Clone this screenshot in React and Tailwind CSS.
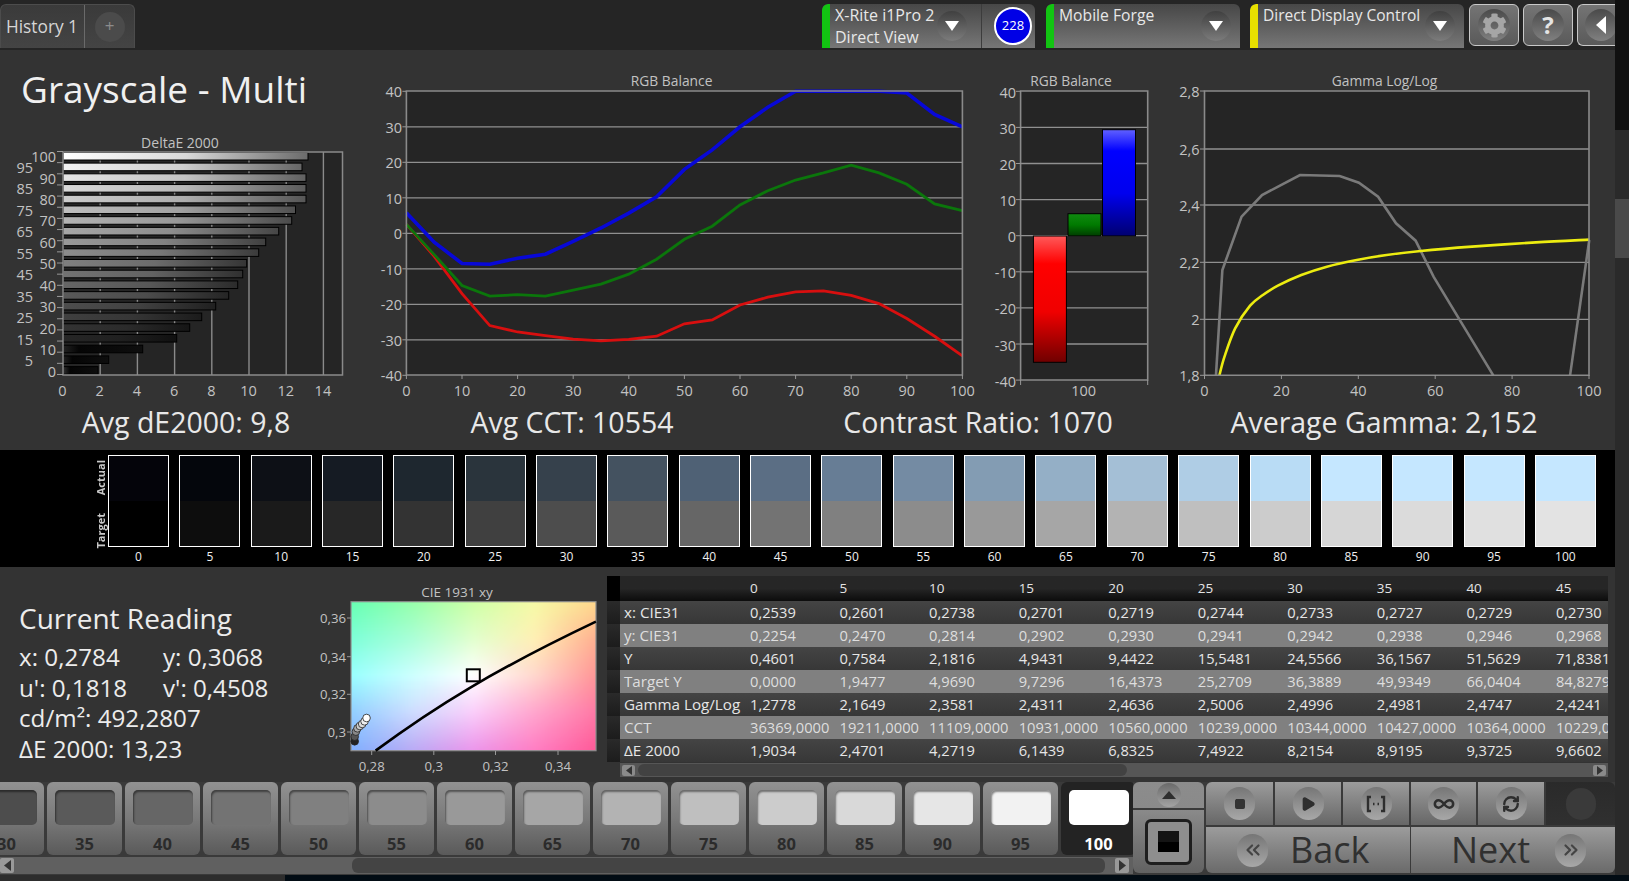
import React from 'react'
import { Play, Square, Infinity as InfinityIcon, RefreshCw, ChevronsLeft, ChevronsRight } from 'lucide-react'
import { FaCog } from 'react-icons/fa'

const levels = [0, 5, 10, 15, 20, 25, 30, 35, 40, 45, 50, 55, 60, 65, 70, 75, 80, 85, 90, 95, 100]

// right end of every DeltaE bar, in page pixels
const deltaEnds = [98, 108.7, 142.7, 176.7, 189.7, 201.7, 215.7, 228.7, 237.7, 242.7, 246.7, 258.7, 265.7, 278.7, 291.7, 295.5, 306, 306, 306, 302, 308]

const blue = [5.8, -2.5, -8.5, -8.7, -7, -5.9, -2.3, 1.5, 5.7, 10.3, 18, 23.5, 30, 35.5, 40, 40, 40, 40, 39.5, 33.5, 30]
const green = [2.5, -6, -14.7, -17.7, -17.3, -17.7, -16, -14.3, -11.5, -7.3, -1.7, 2, 8, 12, 15, 17, 19.2, 17, 13.8, 8.3, 6.4]
const red = [2.5, -6.5, -17, -26, -27.8, -28.8, -29.8, -30.3, -29.9, -29, -25.5, -24.4, -20.2, -18, -16.5, -16.2, -17.5, -19.8, -24, -29, -34.5]

const swatches = [
  ['#04040a', '#000000'], ['#04060c', '#0d0d0d'], ['#0d1016', '#1a1a1a'], ['#151b23', '#272727'], ['#1e272f', '#333333'],
  ['#2a343c', '#404040'], ['#36414c', '#4d4d4d'], ['#445260', '#5a5a5a'], ['#4f6175', '#666666'], ['#5b6e84', '#737373'],
  ['#677d95', '#808080'], ['#748ba3', '#8c8c8c'], ['#839cb3', '#999999'], ['#94afc6', '#a6a6a6'], ['#a4bfd6', '#b3b3b3'],
  ['#afcde5', '#bfbfbf'], ['#b9dcf5', '#cccccc'], ['#c5e7ff', '#d6d6d6'], ['#c5e7ff', '#dbdbdb'], ['#c5e7ff', '#e0e0e0'], ['#c5e7ff', '#e3e3e3'],
]

const rows = [
  ['x: CIE31', '0,2539', '0,2601', '0,2738', '0,2701', '0,2719', '0,2744', '0,2733', '0,2727', '0,2729', '0,2730'],
  ['y: CIE31', '0,2254', '0,2470', '0,2814', '0,2902', '0,2930', '0,2941', '0,2942', '0,2938', '0,2946', '0,2968'],
  ['Y', '0,4601', '0,7584', '2,1816', '4,9431', '9,4422', '15,5481', '24,5566', '36,1567', '51,5629', '71,8381'],
  ['Target Y', '0,0000', '1,9477', '4,9690', '9,7296', '16,4373', '25,2709', '36,3889', '49,9349', '66,0404', '84,8279'],
  ['Gamma Log/Log', '1,2778', '2,1649', '2,3581', '2,4311', '2,4636', '2,5006', '2,4996', '2,4981', '2,4747', '2,4241'],
  ['CCT', '36369,0000', '19211,0000', '11109,0000', '10931,0000', '10560,0000', '10239,0000', '10344,0000', '10427,0000', '10364,0000', '10229,0000'],
  ['ΔE 2000', '1,9034', '2,4701', '4,2719', '6,1439', '6,8325', '7,4922', '8,2154', '8,9195', '9,3725', '9,6602'],
]

const tiles = [
  [30, '#4d4d4d'], [35, '#5a5a5a'], [40, '#666666'], [45, '#737373'], [50, '#808080'], [55, '#8c8c8c'], [60, '#999999'], [65, '#a6a6a6'],
  [70, '#b3b3b3'], [75, '#bfbfbf'], [80, '#cccccc'], [85, '#d9d9d9'], [90, '#e6e6e6'], [95, '#f2f2f2'],
]

// colours of the xy plot, sampled on a 5x5 grid
const cieGrid = [
  [[102, 255, 178], [150, 255, 170], [205, 255, 165], [245, 250, 165], [255, 217, 140]],
  [[125, 255, 215], [170, 255, 215], [225, 255, 205], [255, 240, 180], [255, 176, 144]],
  [[153, 255, 255], [205, 255, 255], [255, 255, 255], [255, 215, 205], [255, 150, 150]],
  [[145, 205, 255], [205, 220, 255], [250, 205, 250], [255, 165, 205], [255, 120, 165]],
  [[128, 176, 255], [185, 170, 245], [235, 150, 235], [255, 125, 195], [255, 90, 152]],
]

const clamp01 = (n) => Math.min(Math.max(n, 0), 1)

const cieColor = (rawU, rawV) => {
  const gx = clamp01(rawU) * 4
  const gy = clamp01(rawV) * 4
  const ix = Math.min(Math.floor(gx), 3)
  const iy = Math.min(Math.floor(gy), 3)
  const fx = gx - ix
  const fy = gy - iy
  const c = [0, 1, 2].map((k) =>
    Math.round(
      cieGrid[iy][ix][k] * (1 - fx) * (1 - fy) +
        cieGrid[iy][ix + 1][k] * fx * (1 - fy) +
        cieGrid[iy + 1][ix][k] * (1 - fx) * fy +
        cieGrid[iy + 1][ix + 1][k] * fx * fy
    )
  )
  return `rgb(${c[0]},${c[1]},${c[2]})`
}

// catmull-rom through the points, as svg beziers
const smooth = (p) => {
  let d = `M${p[0][0]} ${p[0][1]}`
  for (let i = 0; i < p.length - 1; i++) {
    const a = p[Math.max(i - 1, 0)]
    const b = p[i]
    const c = p[i + 1]
    const e = p[Math.min(i + 2, p.length - 1)]
    d += `C${b[0] + (c[0] - a[0]) / 6} ${b[1] + (c[1] - a[1]) / 6} ${c[0] - (e[0] - b[0]) / 6} ${c[1] - (e[1] - b[1]) / 6} ${c[0]} ${c[1]}`
  }
  return d
}

const Label = ({ x, y, children, anchor = 'middle', className = 'fill-[#c2c2c2]', size = 13.8 }) => (
  <text x={x} y={y} textAnchor={anchor} dominantBaseline="central" fontSize={size} className={className}>
    {children}
  </text>
)

const DeltaChart = () => {
  const barY = (i) => 370.4 - i * 10.71
  return (
    <svg width="370" height="270" viewBox="0 130 370 270" className="block">
      <defs>
        {levels.map((l) => {
          const base = Math.max(Math.round(l * 2.55), 34)
          const mid = Math.round(base * 0.85)
          const end = Math.round(base * 0.42)
          return (
            <linearGradient key={l} id={`de${l}`} x1="0" x2="1" y1="0" y2="0">
              <stop offset="0" stopColor={l === 0 ? '#333' : `rgb(${base},${base},${base})`} />
              <stop offset={l < 15 ? '0.2' : '0.5'} stopColor={l < 15 ? '#050505' : `rgb(${mid},${mid},${mid})`} />
              <stop offset="1" stopColor={`rgb(${end},${end},${end})`} />
            </linearGradient>
          )
        })}
      </defs>
      <Label x={180} y={142.5} size={14}>DeltaE 2000</Label>
      <rect x="63" y="152" width="279.5" height="223" fill="#252525" />
      {[2, 4, 6, 8, 10, 12, 14].map((v) => (
        <line key={v} x1={63 + v * 18.6} x2={63 + v * 18.6} y1="152" y2="375" stroke="#8a8a8a" strokeWidth="1.4" />
      ))}
      {levels.map((l, i) => (
        <rect key={l} x="63" y={barY(i) - 3.8} width={deltaEnds[i] - 63} height="7.6" fill={`url(#de${l})`} stroke="#000" strokeWidth="1" />
      ))}
      <path d="M63 152H342.5V375H63Z" fill="none" stroke="#8a8a8a" strokeWidth="1.5" />
      {levels.map((l, i) => (
        <line key={l} x1="57" x2="63" y1={151.5 + i * 11.15} y2={151.5 + i * 11.15} stroke="#999" strokeWidth="1" />
      ))}
      {levels.map((l, i) => (
        <Label key={l} x={i % 2 === 0 ? 56 : 33} y={371.2 - i * 10.73} anchor="end" size={14.5}>{l}</Label>
      ))}
      {[0, 2, 4, 6, 8, 10, 12, 14].map((v) => (
        <Label key={v} x={62.5 + v * 18.6} y={390} size={14.5}>{v}</Label>
      ))}
    </svg>
  )
}

const BalanceChart = () => {
  const left = 406.4
  const step = 556 / 20
  const yOf = (v) => 233.3 - v * 3.55
  const line = (data) => data.map((v, i) => `${left + i * step},${yOf(v)}`).join(' ')
  return (
    <svg width="610" height="350" viewBox="370 50 610 350" className="block">
      <Label x={671.6} y={80.8}>RGB Balance</Label>
      <rect x={left} y="91" width="556" height="284" fill="#252525" />
      {[30, 20, 10, 0, -10, -20, -30].map((v) => (
        <line key={v} x1={left} x2={962.4} y1={yOf(v)} y2={yOf(v)} stroke="#909090" strokeWidth="1.3" />
      ))}
      <polyline points={line(red)} fill="none" stroke="#d80f0f" strokeWidth="2.8" />
      <polyline points={line(green)} fill="none" stroke="#0b760b" strokeWidth="2.8" />
      <polyline points={line(blue)} fill="none" stroke="#0808d8" strokeWidth="3.6" />
      <path d={`M${left} 91H962.4V375H${left}Z`} fill="none" stroke="#8a8a8a" strokeWidth="1.6" />
      {[40, 30, 20, 10, 0, -10, -20, -30, -40].map((v) => (
        <g key={v}>
          <line x1={left - 4} x2={left} y1={yOf(v)} y2={yOf(v)} stroke="#999" />
          <Label x={402} y={yOf(v) + 0.5} anchor="end" size={14.5}>{v}</Label>
        </g>
      ))}
      {[0, 10, 20, 30, 40, 50, 60, 70, 80, 90, 100].map((v) => (
        <g key={v}>
          <line x1={left + v * 5.56} x2={left + v * 5.56} y1="375" y2="379" stroke="#999" />
          <Label x={left + v * 5.56} y={390} size={14.5}>{v}</Label>
        </g>
      ))}
    </svg>
  )
}

const SummaryBars = () => {
  const yOf = (v) => 235.7 - v * 3.61
  return (
    <svg width="190" height="350" viewBox="980 50 190 350" className="block">
      <defs>
        <linearGradient id="barRed" x1="0" x2="0" y1="0" y2="1">
          <stop offset="0" stopColor="#ff5a5a" />
          <stop offset="0.22" stopColor="#ff0000" />
          <stop offset="0.6" stopColor="#f00000" />
          <stop offset="1" stopColor="#700000" />
        </linearGradient>
        <linearGradient id="barGreen" x1="0" x2="0" y1="0" y2="1">
          <stop offset="0" stopColor="#108a10" />
          <stop offset="0.5" stopColor="#007a00" />
          <stop offset="1" stopColor="#003c00" />
        </linearGradient>
        <linearGradient id="barBlue" x1="0" x2="0" y1="0" y2="1">
          <stop offset="0" stopColor="#6060ff" />
          <stop offset="0.2" stopColor="#0000ff" />
          <stop offset="0.6" stopColor="#0000ee" />
          <stop offset="1" stopColor="#000070" />
        </linearGradient>
      </defs>
      <Label x={1071} y={80.8}>RGB Balance</Label>
      <rect x="1020.6" y="91" width="127" height="289" fill="#252525" />
      {[30, 20, 10, 0, -10, -20, -30].map((v) => (
        <line key={v} x1="1020.6" x2="1147.7" y1={yOf(v)} y2={yOf(v)} stroke="#909090" strokeWidth="1.3" />
      ))}
      <rect x="1033.4" y="236" width="33" height="126.3" fill="url(#barRed)" stroke="#000" />
      <rect x="1068" y="213.7" width="33" height="22.3" fill="url(#barGreen)" stroke="#000" />
      <rect x="1102.5" y="129.7" width="33" height="106.3" fill="url(#barBlue)" stroke="#000" />
      <path d="M1020.6 91H1147.7V380H1020.6Z" fill="none" stroke="#8a8a8a" strokeWidth="1.6" />
      <path d="M1020.6 380V385M1147.7 380V385" stroke="#999" />
      {[40, 30, 20, 10, 0, -10, -20, -30, -40].map((v) => (
        <g key={v}>
          <line x1="1016" x2="1020.6" y1={yOf(v)} y2={yOf(v)} stroke="#999" />
          <Label x={1016} y={yOf(v) + 1} anchor="end" size={14.5}>{v}</Label>
        </g>
      ))}
      <Label x={1083.7} y={390} size={14.5}>100</Label>
    </svg>
  )
}

const GammaChart = () => {
  const px = (zx) => zx / 2.344 + 960
  const py = (zy) => zy / 3 + 70
  const map = (list) => list.map(([x, y]) => [px(x), py(y)])
  const pts = (list) => map(list).map(([x, y]) => `${x},${y}`).join(' ')
  const gray = [[600, 916], [615, 600], [660, 440], [708, 375], [750, 347], [797, 315], [890, 318], [935, 338], [980, 380], [1022, 460], [1068, 512], [1110, 620], [1250, 916]]
  const yellow = [[608, 916], [620, 860], [645, 775], [680, 707], [710, 675], [745, 647], [800, 615], [860, 590], [930, 570], [1000, 555], [1080, 543], [1200, 530], [1350, 517], [1475, 509]]
  return (
    <svg width="445" height="350" viewBox="1170 50 445 350" className="block">
      <Label x={1384.5} y={80.8}>Gamma Log/Log</Label>
      <rect x="1204.5" y="91" width="384.5" height="284.3" fill="#252525" />
      {[149, 205, 262.3, 319.3].map((y) => (
        <line key={y} x1="1204.5" x2="1589" y1={y} y2={y} stroke="#909090" strokeWidth="1.3" />
      ))}
      <polyline points={pts(gray)} fill="none" stroke="#7a7a7a" strokeWidth="2.6" />
      <polyline points={pts([[1430, 916], [1475, 510]])} fill="none" stroke="#7a7a7a" strokeWidth="2.6" />
      <path d={smooth(map(yellow))} fill="none" stroke="#ecec10" strokeWidth="2.6" />
      <path d="M1204.5 91H1589V375.3H1204.5Z" fill="none" stroke="#8a8a8a" strokeWidth="1.6" />
      {[['2,8', 91], ['2,6', 149], ['2,4', 205], ['2,2', 262.3], ['2', 319.3], ['1,8', 375.3]].map(([t, y]) => (
        <g key={t}>
          <line x1="1200" x2="1204.5" y1={y} y2={y} stroke="#999" />
          <Label x={1199.5} y={y} anchor="end" size={14.5}>{t}</Label>
        </g>
      ))}
      {[0, 20, 40, 60, 80, 100].map((v) => (
        <g key={v}>
          <line x1={1204.5 + v * 3.845} x2={1204.5 + v * 3.845} y1="375" y2="379" stroke="#999" />
          <Label x={1204.5 + v * 3.845} y={390} size={14.5}>{v}</Label>
        </g>
      ))}
    </svg>
  )
}

const CieChart = () => {
  const cells = []
  // 4px cells, blurred below so the plot reads as one smooth field
  for (let j = -3; j < 41; j++) {
    for (let i = -3; i < 64; i++) {
      cells.push(
        <rect key={`${i}-${j}`} x={351 + i * 4} y={601 + j * 4} width="4.5" height="4.5" fill={cieColor((i + 0.5) / 61.25, (j + 0.5) / 37.25)} />
      )
    }
  }
  const px = (zx) => zx / 2.529
  const py = (zy) => zy / 3 + 580
  const dots = [[897, 484, '#222'], [897, 470, '#555'], [900, 455, '#888'], [904, 445, '#aaa'], [910, 438, '#ccc'], [916, 432, '#ddd'], [922, 424, '#eee'], [927, 414, '#fff']]
  return (
    <svg width="307" height="215" viewBox="300 567 307 215" className="block">
      <defs>
        <clipPath id="ciePlot">
          <rect x="351" y="601.7" width="245" height="149" />
        </clipPath>
        <filter id="cieBlur" x="-5%" y="-5%" width="110%" height="110%">
          <feGaussianBlur stdDeviation="2" />
        </filter>
      </defs>
      <Label x={457} y={592.2} size={13.5}>CIE 1931 xy</Label>
      <g clipPath="url(#ciePlot)">
        <g filter="url(#cieBlur)">{cells}</g>
      </g>
      <rect x="351" y="601.7" width="245" height="149" fill="none" stroke="#8c8c8c" strokeWidth="1.2" />
      <path
        d={`M${px(950)} ${py(512)}C${px(1100)} ${py(380)} ${px(1250)} ${py(270)} ${px(1507)} ${py(125)}`}
        fill="none"
        stroke="#000"
        strokeWidth="2.6"
      />
      <rect x="466.8" y="669.3" width="13" height="12" fill="none" stroke="#000" strokeWidth="2" />
      {dots.map(([x, y, c]) => (
        <circle key={y} cx={px(x)} cy={py(y)} r="3.8" fill={c} stroke="#222" strokeWidth="0.8" />
      ))}
      {[['0,36', 618], ['0,34', 656.7], ['0,32', 694.3], ['0,3', 732]].map(([t, y]) => (
        <g key={t}>
          <line x1="347" x2="351" y1={y} y2={y} stroke="#999" />
          <Label x={346} y={y} anchor="end" size={13.2}>{t}</Label>
        </g>
      ))}
      {[['0,28', 371.7], ['0,3', 433.8], ['0,32', 495.5], ['0,34', 558]].map(([t, x]) => (
        <g key={t}>
          <line x1={x} x2={x} y1="751" y2="755" stroke="#999" />
          <Label x={x} y={766} size={13.2}>{t}</Label>
        </g>
      ))}
    </svg>
  )
}

const TriangleDown = ({ className = 'fill-white' }) => (
  <svg width="14" height="10" viewBox="0 0 14 10" className={className}>
    <polygon points="0,0 14,0 7,10" />
  </svg>
)

const Dropdown = () => (
  <div className="flex h-[30px] w-[30px] shrink-0 items-center justify-center rounded-full bg-linear-to-b from-[#404040] to-[#7c7c7c]">
    <TriangleDown />
  </div>
)

const DevicePanel = ({ bar, width, gap, children }) => (
  <div className={`flex h-[44px] shrink-0 overflow-hidden rounded-t-md bg-linear-to-b from-[#474747] to-[#777777] ${width} ${gap}`}>
    <div className={`w-[8px] shrink-0 rounded-tl-md ${bar}`} />
    {children}
  </div>
)

const IconButton = ({ children, className = '' }) => (
  <div className={`flex h-[42px] shrink-0 items-center justify-center rounded-md border border-[#c8c8c8] bg-linear-to-b from-[#747474] to-[#5a5a5a] ${className}`}>
    <div className="flex h-[32px] w-[32px] items-center justify-center rounded-full bg-linear-to-b from-[#4a4a4a] to-[#808080]">{children}</div>
  </div>
)

const TopBar = () => (
  <div className="flex h-[50px] shrink-0 items-start bg-[#252525] pt-[4px]">
    <div className="flex h-[44px] w-[135px] shrink-0 rounded-t-md border border-b-0 border-[#4c4c4c] bg-linear-to-b from-[#3a3a3a] to-[#444444]">
      <div className="flex w-[84px] items-center border-r border-[#6a6a6a] pl-[5px] text-[17.3px] text-[#d6d6d6]">History 1</div>
      <div className="flex flex-1 items-center justify-center">
        <div className="flex h-[30px] w-[30px] items-center justify-center rounded-full bg-[#4b4b4b] pb-[1px] text-[17px] text-[#8c8c8c]">+</div>
      </div>
    </div>
    <DevicePanel bar="bg-[#12c412]" width="w-[213px]" gap="ml-[687px]">
      <div className="flex w-[152px] shrink-0 items-center border-r border-[#3c3c3c]">
        <div className="w-[107px] pl-[5px] text-[16px] leading-[22px] whitespace-nowrap text-[#e8e8e8]">
          <div>X-Rite i1Pro 2</div>
          <div>Direct View</div>
        </div>
        <Dropdown />
      </div>
      <div className="flex flex-1 items-center justify-center pl-[9px]">
        <div className="flex h-[38px] w-[38px] shrink-0 items-center justify-center rounded-full border-2 border-white bg-[#0000e6] text-[13px] text-white">228</div>
      </div>
    </DevicePanel>
    <DevicePanel bar="bg-[#12c412]" width="w-[194px]" gap="ml-[11px]">
      <div className="flex flex-1 items-center justify-between pr-[9px]">
        <div className="self-start pl-[5px] text-[15.7px] leading-[22px] text-[#e8e8e8]">Mobile Forge</div>
        <Dropdown />
      </div>
    </DevicePanel>
    <DevicePanel bar="bg-[#e8e000]" width="w-[214px]" gap="ml-[10px]">
      <div className="flex flex-1 items-center justify-between pr-[9px]">
        <div className="self-start pl-[5px] text-[15.5px] leading-[22px] whitespace-nowrap text-[#e8e8e8]">Direct Display Control</div>
        <Dropdown />
      </div>
    </DevicePanel>
    <IconButton className="ml-[5px] w-[50px]">
      <FaCog size={25} className="text-[#a6a6a6]" />
    </IconButton>
    <IconButton className="ml-[4px] w-[50px]">
      <span className="text-[24px] font-bold text-[#e4e4e4]">?</span>
    </IconButton>
    <IconButton className="ml-[4px] w-[40px] justify-end rounded-r-none border-r-0">
      <svg width="10" height="18" viewBox="0 0 10 18" className="fill-white">
        <polygon points="10,0 10,18 0,9" />
      </svg>
    </IconButton>
  </div>
)

const ChartsPanel = () => (
  <div className="flex h-[400px] shrink-0 flex-col bg-[#333333]">
    <div className="flex h-[350px] shrink-0">
      <div className="flex w-[370px] shrink-0 flex-col">
        <h1 className="h-[80px] pt-[17px] pl-[21px] text-[37px] leading-[44px] whitespace-nowrap text-[#f0f0f0]">Grayscale - Multi</h1>
        <DeltaChart />
      </div>
      <BalanceChart />
      <SummaryBars />
      <GammaChart />
    </div>
    <div className="flex h-[50px] items-center pb-[5px] text-[28.5px] whitespace-nowrap text-[#e8e8e8]">
      <div className="w-[372px] text-center">Avg dE2000: 9,8</div>
      <div className="w-[400px] text-center">Avg CCT: 10554</div>
      <div className="w-[412px] text-center">Contrast Ratio: 1070</div>
      <div className="w-[400px] text-center">Average Gamma: 2,152</div>
    </div>
  </div>
)

const SwatchBand = () => (
  <div className="flex h-[117px] shrink-0 bg-black pt-[5px] pl-[92px]">
    <div className="flex h-[92px] w-[16px] shrink-0 flex-col gap-[18px] pt-[5px] text-[11px] leading-none font-bold text-[#c8c8c8]">
      <span className="rotate-180 self-center [writing-mode:vertical-rl]">Actual</span>
      <span className="rotate-180 self-center [writing-mode:vertical-rl]">Target</span>
    </div>
    <div className="flex gap-[10.35px]">
      {swatches.map(([actual, target], i) => (
        <div key={levels[i]} className="w-[61px] shrink-0">
          <div className="h-[92px] border-[1.5px] border-white">
            <div className="h-1/2" style={{ backgroundColor: actual }} />
            <div className="h-1/2" style={{ backgroundColor: target }} />
          </div>
          <div className="mt-[1px] text-center text-[12px] leading-[17px] text-[#f0f0f0]">{levels[i]}</div>
        </div>
      ))}
    </div>
  </div>
)

const Readings = () => (
  <div className="w-[300px] shrink-0 pt-[34px] pl-[19px] text-[#ececec]">
    <h2 className="text-[28px] leading-[34px] whitespace-nowrap">Current Reading</h2>
    <div className="mt-[7px] text-[24.2px] leading-[30.6px] whitespace-nowrap">
      <div className="flex">
        <span className="w-[144px]">x: 0,2784</span>
        <span>y: 0,3068</span>
      </div>
      <div className="flex">
        <span className="w-[144px]">u': 0,1818</span>
        <span>v': 0,4508</span>
      </div>
      <div>cd/m²: 492,2807</div>
      <div>ΔE 2000: 13,23</div>
    </div>
  </div>
)

const ReadingsTable = () => (
  <div className="mt-[9px] flex h-[201px] w-[1001px] shrink-0">
    <div className="w-[13px] shrink-0">
      <div className="h-[25px] bg-black" />
      {rows.map((r) => (
        <div key={r[0]} className="h-[23px] bg-linear-to-b from-[#2a2a2a] to-[#1c1c1c]" />
      ))}
    </div>
    <div className="flex min-w-0 flex-1 flex-col">
      <div className="h-[187px] overflow-hidden">
        <table className="w-[1025.5px] table-fixed border-collapse text-[14.7px] whitespace-nowrap">
          <colgroup>
            <col className="w-[130px]" />
            {rows[0].slice(1).map((_, i) => (
              <col key={i} className="w-[89.55px]" />
            ))}
          </colgroup>
          <thead>
            <tr className="h-[25px] bg-linear-to-b from-[#262626] via-[#262626] to-[#0c0c0c] text-left text-[#e4e4e4]">
              <th />
              {levels.slice(0, 10).map((l) => (
                <th key={l} className="text-[13.5px] font-normal">{l}</th>
              ))}
            </tr>
          </thead>
          <tbody>
            {rows.map((r, i) => (
              <tr key={r[0]} className={`h-[23px] ${i % 2 === 0 ? 'bg-linear-to-b from-[#444444] to-[#373737] text-[#e6e6e6]' : 'bg-[#808080] text-[#dedede]'}`}>
                {r.map((c, j) => (
                  <td key={j} className={`overflow-visible p-0 ${j === 0 ? 'pl-[4px] text-[15.2px]' : ''}`}>{c}</td>
                ))}
              </tr>
            ))}
          </tbody>
        </table>
      </div>
      <div className="flex h-[14px] items-center bg-[#565656] px-[2px]">
        <div className="flex h-[11px] w-[13px] items-center justify-center rounded-[2px] bg-[#8a8a8a]">
          <svg width="6" height="9" viewBox="0 0 6 9" className="fill-[#333]"><polygon points="6,0 6,9 0,4.5" /></svg>
        </div>
        <div className="ml-[3px] h-[12px] w-[489px] rounded-md bg-[#424242]" />
        <div className="ml-auto flex h-[11px] w-[13px] items-center justify-center rounded-[2px] bg-[#8a8a8a]">
          <svg width="6" height="9" viewBox="0 0 6 9" className="fill-[#333]"><polygon points="0,0 0,9 6,4.5" /></svg>
        </div>
      </div>
    </div>
  </div>
)

const Tile = ({ label, color }) => (
  <div className="flex h-[73px] w-[75px] shrink-0 flex-col items-center rounded-md bg-linear-to-b from-[#929292] via-[#7a7a7a] to-[#5a5a5a] pt-[8px]">
    <div
      className="h-[35px] w-[60px] rounded-[5px] shadow-[inset_1px_2px_2px_rgba(0,0,0,0.45)]"
      style={{ backgroundColor: color }}
    />
    <div className="mt-[9px] text-[16.5px] leading-[20px] font-bold text-[#2b2b2b]">{label}</div>
  </div>
)

const RoundIcon = ({ children }) => (
  <div className="flex h-[33px] w-[31px] items-center justify-center rounded-full bg-linear-to-b from-[#767676] to-[#a8a8a8]">{children}</div>
)

const TransportButton = ({ children, className = '' }) => (
  <div className={`flex h-full items-center justify-center border-r-2 border-[#3a3a3a] bg-linear-to-b from-[#9c9c9c] to-[#676767] ${className}`}>
    <RoundIcon>{children}</RoundIcon>
  </div>
)

const Toolbar = () => (
  <div className="flex h-[93px] shrink-0 bg-[#3a3a3a]">
    <div className="flex w-[1133px] shrink-0 flex-col overflow-hidden">
      <div className="-ml-[31px] flex h-[73px] gap-[3px]">
        {tiles.map(([label, color]) => (
          <Tile key={label} label={label} color={color} />
        ))}
        <div className="flex h-[73px] w-[75px] shrink-0 flex-col items-center rounded-md bg-[#232323] pt-[8px]">
          <div className="h-[35px] w-[60px] rounded-[5px] bg-white" />
          <div className="mt-[9px] text-[16.5px] leading-[20px] font-bold text-white">100</div>
        </div>
      </div>
      <div className="mt-[2px] flex h-[17px] items-center bg-[#606060]">
        <div className="flex h-[15px] w-[14px] items-center justify-center rounded-[2px] bg-[#999]">
          <svg width="7" height="11" viewBox="0 0 7 11" className="fill-[#333]"><polygon points="7,0 7,11 0,5.5" /></svg>
        </div>
        <div className="ml-[338px] h-[15px] w-[753px] rounded-md bg-[#444444]" />
        <div className="ml-[10px] flex h-[15px] w-[14px] items-center justify-center rounded-[2px] bg-[#999]">
          <svg width="7" height="11" viewBox="0 0 7 11" className="fill-[#333]"><polygon points="0,0 0,11 7,5.5" /></svg>
        </div>
      </div>
    </div>
    <div className="h-[91px] w-[71px] shrink-0 overflow-hidden rounded-md">
      <div className="flex h-[28px] items-center justify-center border-b-2 border-[#3a3a3a] bg-linear-to-b from-[#8c8c8c] to-[#8a8a8a]">
        <div className="flex h-[24px] w-[24px] items-center justify-center rounded-full bg-linear-to-b from-[#6a6a6a] to-[#a4a4a4]">
          <svg width="14" height="8" viewBox="0 0 14 8" className="fill-[#2e2e2e]"><polygon points="7,0 14,8 0,8" /></svg>
        </div>
      </div>
      <div className="flex h-[63px] items-center justify-center bg-linear-to-b from-[#8a8a8a] to-[#626262]">
        <div className="flex h-[46px] w-[47px] items-center justify-center rounded-md border-[3px] border-[#1e1e1e] bg-[#8e8e8e]">
          <div className="h-[21px] w-[21px] bg-linear-to-b from-[#141414] from-50% to-black to-50%" />
        </div>
      </div>
    </div>
    <div className="ml-[2px] flex h-[91px] w-[409px] shrink-0 flex-col overflow-hidden rounded-md">
      <div className="flex h-[45px] shrink-0 border-b-2 border-[#3a3a3a]">
        <TransportButton className="w-[69px]">
          <Square size={12} className="fill-[#333] text-[#333]" />
        </TransportButton>
        <TransportButton className="w-[68px]">
          <Play size={16} className="fill-[#2e2e2e] text-[#2e2e2e]" />
        </TransportButton>
        <TransportButton className="w-[68px]">
          <svg width="20" height="18" viewBox="0 0 20 18" fill="none" stroke="#2e2e2e" strokeWidth="2.4">
            <path d="M5 2H2V16H5M15 2H18V16H15" />
            <path d="M7 9H8.5M11.5 9H13" strokeWidth="2.6" />
          </svg>
        </TransportButton>
        <TransportButton className="w-[67px]">
          <InfinityIcon size={22} strokeWidth={2.8} className="text-[#2e2e2e]" />
        </TransportButton>
        <TransportButton className="w-[68px] border-r-0">
          <RefreshCw size={18} strokeWidth={3.2} className="text-[#2e2e2e]" />
        </TransportButton>
        <div className="flex flex-1 items-center justify-center bg-linear-to-b from-[#2a2a2a] to-[#303030]">
          <div className="h-[32px] w-[30px] rounded-full bg-[#3a3a3a]" />
        </div>
      </div>
      <div className="flex flex-1 text-[36px] leading-none font-medium text-[#303030]">
        <div className="flex w-[205px] items-center border-r border-[#3a3a3a] bg-linear-to-b from-[#9c9c9c] to-[#6a6a6a] pl-[31px]">
          <RoundIcon>
            <ChevronsLeft size={22} strokeWidth={2.4} className="text-[#444]" />
          </RoundIcon>
          <span className="ml-[22px] pb-[1px]">Back</span>
        </div>
        <div className="flex flex-1 items-center justify-end bg-linear-to-b from-[#9c9c9c] to-[#6a6a6a] pr-[29px]">
          <span className="mr-[25px] pb-[1px]">Next</span>
          <RoundIcon>
            <ChevronsRight size={22} strokeWidth={2.4} className="text-[#444]" />
          </RoundIcon>
        </div>
      </div>
    </div>
  </div>
)

export default function App() {
  return (
    <div className="flex h-[881px] w-[1629px] overflow-hidden bg-[#252525] font-['Open_Sans',sans-serif]">
      <div className="flex w-[1615px] shrink-0 flex-col">
        <TopBar />
        <ChartsPanel />
        <SwatchBand />
        <div className="flex h-[215px] shrink-0 bg-[#333333]">
          <Readings />
          <CieChart />
          <ReadingsTable />
        </div>
        <Toolbar />
        <div className="flex h-[6px] shrink-0">
          <div className="w-[285px] bg-[#2d2d2d]" />
          <div className="flex-1 bg-[#020c14]" />
        </div>
      </div>
      {/* page scroll strip */}
      <div className="flex w-[14px] shrink-0 flex-col">
        <div className="h-[130px] bg-[#101010]" />
        <div className="flex-1 bg-[#2a2a2a] pt-[69px]">
          <div className="h-[59px] bg-[#4a4a4a]" />
        </div>
        <div className="h-[6px] bg-[#020c14]" />
      </div>
    </div>
  )
}
